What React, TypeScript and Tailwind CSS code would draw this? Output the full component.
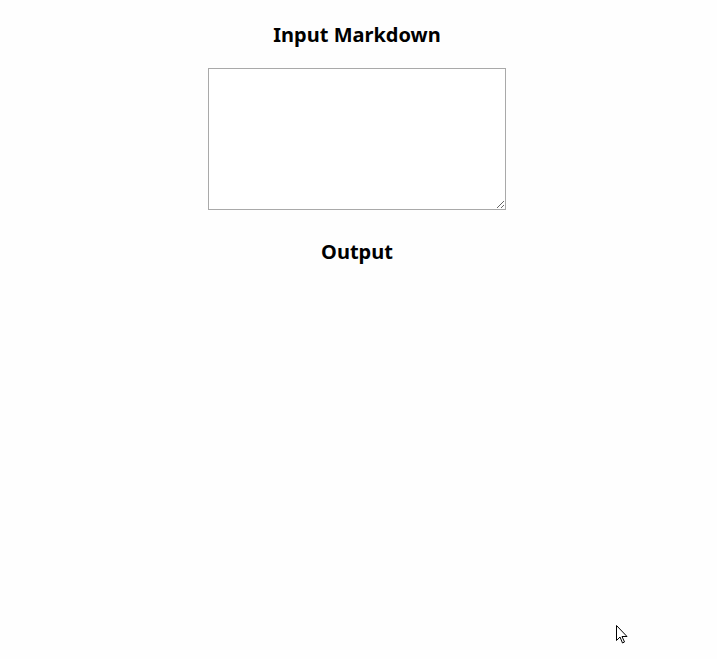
import React, { useState } from "react";

const font = { fontFamily: '"Noto Sans", "Open Sans", sans-serif' };

const App = () => {
  const [text, setText] = useState("");

  return (
    <div className="relative w-full min-h-[659px] bg-[#fefefe] text-black" style={font}>
      <div className="flex flex-col items-center pt-[21px] pr-[3px]">
        <h2 className="text-[20px] font-bold leading-[28px]">Input Markdown</h2>
        <textarea
          value={text}
          onChange={(e) => setText(e.target.value)}
          className="mt-[19px] w-[298px] h-[142px] border border-[#a9a9a9] bg-white p-[2px] text-[13px] outline-none"
        />
        <h2 className="mt-[28px] text-[20px] font-bold leading-[28px]">Output</h2>
        <div className="w-full" />
      </div>

      {/* mouse pointer */}
      <svg
        className="absolute left-[616px] top-[625px]"
        width="13"
        height="20"
        viewBox="0 0 13 20"
      >
        <path
          d="M0.5 0.5 L0.5 15.5 L4 12 L6.5 18 L8.5 17 L6 11.5 L11 11.5 Z"
          fill="#fff"
          stroke="#000"
          strokeWidth="1"
        />
      </svg>
    </div>
  );
};

export default App;
